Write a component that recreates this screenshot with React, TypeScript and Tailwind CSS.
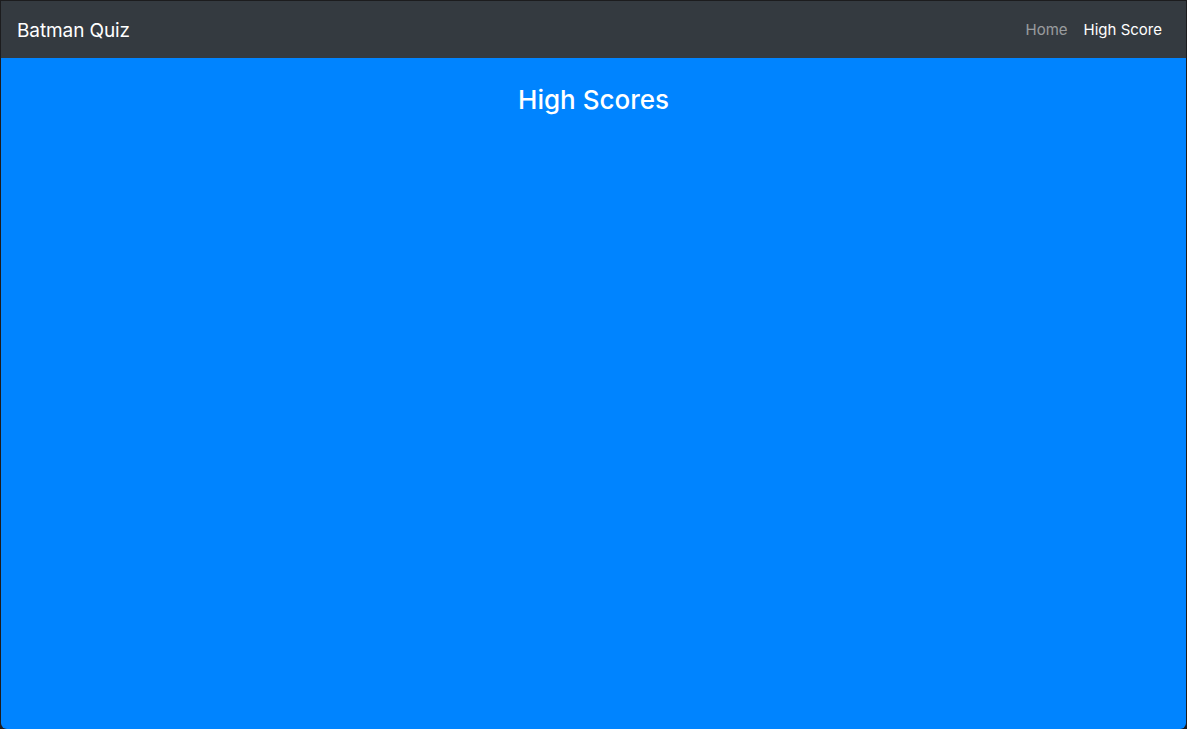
export default function App() {
  return (
    <div className="h-[729px] w-[1187px] bg-[#1c1c1e] pt-px px-px" style={{ fontFamily: 'Inter, "Liberation Sans", Arial, sans-serif' }}>
      <div className="flex h-[728px] flex-col overflow-hidden rounded-b-[6px] bg-[#0084ff]">
        {/* Navbar */}
        <nav className="flex h-[57px] items-center justify-between bg-[#343a40] px-4 pt-[2px]">
          <a className="text-[19px] leading-[30px] tracking-[-0.1px] text-white">Batman Quiz</a>
          <div className="flex items-center">
            <a className="px-2 text-[15px] text-white/50">Home</a>
            <a className="px-2 text-[15px] text-white">High Score</a>
          </div>
        </nav>

        {/* Content */}
        <main className="flex-1">
          <h3 className="mt-[26px] text-center text-[26px] font-medium leading-[1.2] text-white">High Scores</h3>
        </main>
      </div>
    </div>
  );
}
